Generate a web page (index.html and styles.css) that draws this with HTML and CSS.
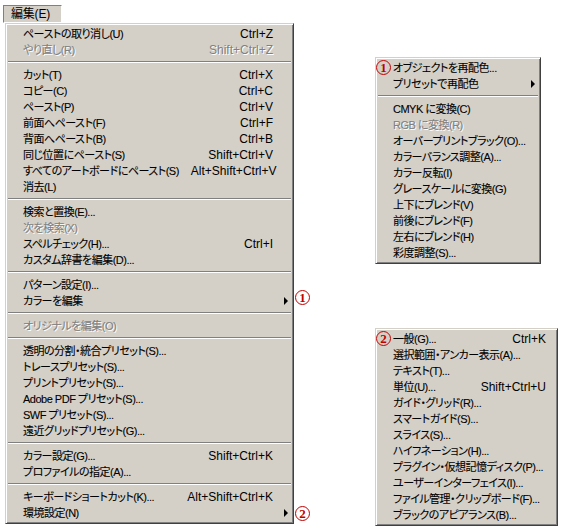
FILE: index.html
```html
<!DOCTYPE html>
<html lang="ja">
<head>
<meta charset="utf-8">
<title>編集メニュー</title>
<link rel="stylesheet" href="styles.css">
</head>
<body>
<div class="canvas">
  <div class="menubar"><span class="tab">編集(E)</span></div>

  <div class="menu main">
    <div class="row"><span class="label">ペーストの取り消し(U)</span><span class="key">Ctrl+Z</span></div>
    <div class="row disabled"><span class="label">やり直し(R)</span><span class="key">Shift+Ctrl+Z</span></div>
    <div class="sep"></div>
    <div class="row"><span class="label">カット(T)</span><span class="key">Ctrl+X</span></div>
    <div class="row"><span class="label">コピー(C)</span><span class="key">Ctrl+C</span></div>
    <div class="row"><span class="label">ペースト(P)</span><span class="key">Ctrl+V</span></div>
    <div class="row"><span class="label">前面へペースト(F)</span><span class="key">Ctrl+F</span></div>
    <div class="row"><span class="label">背面へペースト(B)</span><span class="key">Ctrl+B</span></div>
    <div class="row"><span class="label">同じ位置にペースト(S)</span><span class="key">Shift+Ctrl+V</span></div>
    <div class="row"><span class="label">すべてのアートボードにペースト(S)</span><span class="key">Alt+Shift+Ctrl+V</span></div>
    <div class="row"><span class="label">消去(L)</span></div>
    <div class="sep"></div>
    <div class="row"><span class="label">検索と置換(E)...</span></div>
    <div class="row disabled"><span class="label">次を検索(X)</span></div>
    <div class="row"><span class="label">スペルチェック(H)...</span><span class="key">Ctrl+I</span></div>
    <div class="row"><span class="label">カスタム辞書を編集(D)...</span></div>
    <div class="sep"></div>
    <div class="row"><span class="label">パターン設定(I)...</span></div>
    <div class="row"><span class="label">カラーを編集</span><span class="arrow"></span></div>
    <div class="sep"></div>
    <div class="row disabled"><span class="label">オリジナルを編集(O)</span></div>
    <div class="sep"></div>
    <div class="row"><span class="label">透明の分割・統合プリセット(S)...</span></div>
    <div class="row"><span class="label">トレースプリセット(S)...</span></div>
    <div class="row"><span class="label">プリントプリセット(S)...</span></div>
    <div class="row"><span class="label">Adobe PDF プリセット(S)...</span></div>
    <div class="row"><span class="label">SWF プリセット(S)...</span></div>
    <div class="row"><span class="label">遠近グリッドプリセット(G)...</span></div>
    <div class="sep"></div>
    <div class="row"><span class="label">カラー設定(G)...</span><span class="key">Shift+Ctrl+K</span></div>
    <div class="row"><span class="label">プロファイルの指定(A)...</span></div>
    <div class="sep"></div>
    <div class="row"><span class="label">キーボードショートカット(K)...</span><span class="key">Alt+Shift+Ctrl+K</span></div>
    <div class="row"><span class="label">環境設定(N)</span><span class="arrow"></span></div>
  </div>

  <div class="menu sub sub1">
    <div class="row"><span class="label">オブジェクトを再配色...</span></div>
    <div class="row"><span class="label">プリセットで再配色</span><span class="arrow"></span></div>
    <div class="sep"></div>
    <div class="row"><span class="label">CMYK に変換(C)</span></div>
    <div class="row disabled"><span class="label">RGB に変換(R)</span></div>
    <div class="row"><span class="label">オーバープリントブラック(O)...</span></div>
    <div class="row"><span class="label">カラーバランス調整(A)...</span></div>
    <div class="row"><span class="label">カラー反転(I)</span></div>
    <div class="row"><span class="label">グレースケールに変換(G)</span></div>
    <div class="row"><span class="label">上下にブレンド(V)</span></div>
    <div class="row"><span class="label">前後にブレンド(F)</span></div>
    <div class="row"><span class="label">左右にブレンド(H)</span></div>
    <div class="row"><span class="label">彩度調整(S)...</span></div>
  </div>

  <div class="menu sub sub2">
    <div class="row"><span class="label">一般(G)...</span><span class="key">Ctrl+K</span></div>
    <div class="row"><span class="label">選択範囲・アンカー表示(A)...</span></div>
    <div class="row"><span class="label">テキスト(T)...</span></div>
    <div class="row"><span class="label">単位(U)...</span><span class="key">Shift+Ctrl+U</span></div>
    <div class="row"><span class="label">ガイド・グリッド(R)...</span></div>
    <div class="row"><span class="label">スマートガイド(S)...</span></div>
    <div class="row"><span class="label">スライス(S)...</span></div>
    <div class="row"><span class="label">ハイフネーション(H)...</span></div>
    <div class="row"><span class="label">プラグイン・仮想記憶ディスク(P)...</span></div>
    <div class="row"><span class="label">ユーザーインターフェイス(I)...</span></div>
    <div class="row"><span class="label">ファイル管理・クリップボード(F)...</span></div>
    <div class="row"><span class="label">ブラックのアピアランス(B)...</span></div>
  </div>

  <span class="mark mark-a">1</span>
  <span class="mark mark-b">2</span>
  <span class="mark mark-c">1</span>
  <span class="mark mark-d">2</span>
</div>
</body>
</html>
```

FILE: styles.css
```css
html, body {
  margin: 0;
  padding: 0;
  background: #ffffff;
}

.canvas {
  position: relative;
  width: 572px;
  height: 526px;
  overflow: hidden;
  padding-top: 5px;
  box-sizing: border-box;
  font-family: "Liberation Sans", "Noto Sans CJK JP", sans-serif;
  font-size: 12px;
  font-feature-settings: "palt";
  color: #000;
}

.menubar {
  height: 18px;
  padding-left: 3px;
  display: flex;
}

.tab {
  display: flex;
  align-items: center;
  padding: 0 7px;
  width: 59px;
  height: 18px;
  box-sizing: border-box;
  background: #d4d0c8;
  border: 1px solid;
  border-color: #808080 #ffffff #ffffff #808080;
  line-height: 16px;
  font-size: 12px;
  letter-spacing: -0.2px;
}

.menu {
  background: #d4d0c8;
  border: 1px solid;
  border-color: #d4d0c8 #404040 #404040 #d4d0c8;
  box-shadow: inset 1px 1px 0 #ffffff, inset -1px -1px 0 #808080;
  padding: 2px;
  box-sizing: border-box;
}

.main {
  margin-left: 5px;
  width: 289px;
}

.sub {
  position: absolute;
  left: 375px;
}

.sub1 {
  top: 57px;
  width: 166px;
}

.sub2 {
  top: 328px;
  width: 183px;
}

.row {
  display: flex;
  align-items: center;
  justify-content: space-between;
  height: 16px;
  line-height: 16px;
  padding-left: 15px;
  padding-right: 18px;
  white-space: nowrap;
  position: relative;
}

.label {
  font-size: 11px;
  letter-spacing: -0.5px;
  -webkit-text-stroke: 0.1px currentColor;
}

.sub .row {
  padding-left: 15px;
  padding-right: 9px;
}

.disabled {
  color: #808080;
  text-shadow: 1px 1px 0 #ffffff;
}

.key {
  margin-left: 12px;
}

.arrow {
  position: absolute;
  right: 3px;
  top: 4px;
  width: 0;
  height: 0;
  border-top: 4px solid transparent;
  border-bottom: 4px solid transparent;
  border-left: 4px solid #000;
}

.sep {
  height: 9px;
  position: relative;
}

.sep::before {
  content: "";
  position: absolute;
  left: 0;
  right: 0;
  top: 3px;
  height: 1px;
  background: #808080;
  box-shadow: 0 1px 0 #ffffff;
}

.mark {
  position: absolute;
  width: 15px;
  height: 15px;
  box-sizing: border-box;
  border: 1px solid #c00000;
  border-radius: 50%;
  color: #c00000;
  font-family: "Liberation Serif", serif;
  font-weight: bold;
  font-size: 13px;
  line-height: 13px;
  text-align: center;
}

.mark-a { left: 295px; top: 290px; }
.mark-b { left: 295px; top: 506px; }
.mark-c { left: 376px; top: 60px; }
.mark-d { left: 376px; top: 331px; }
```
